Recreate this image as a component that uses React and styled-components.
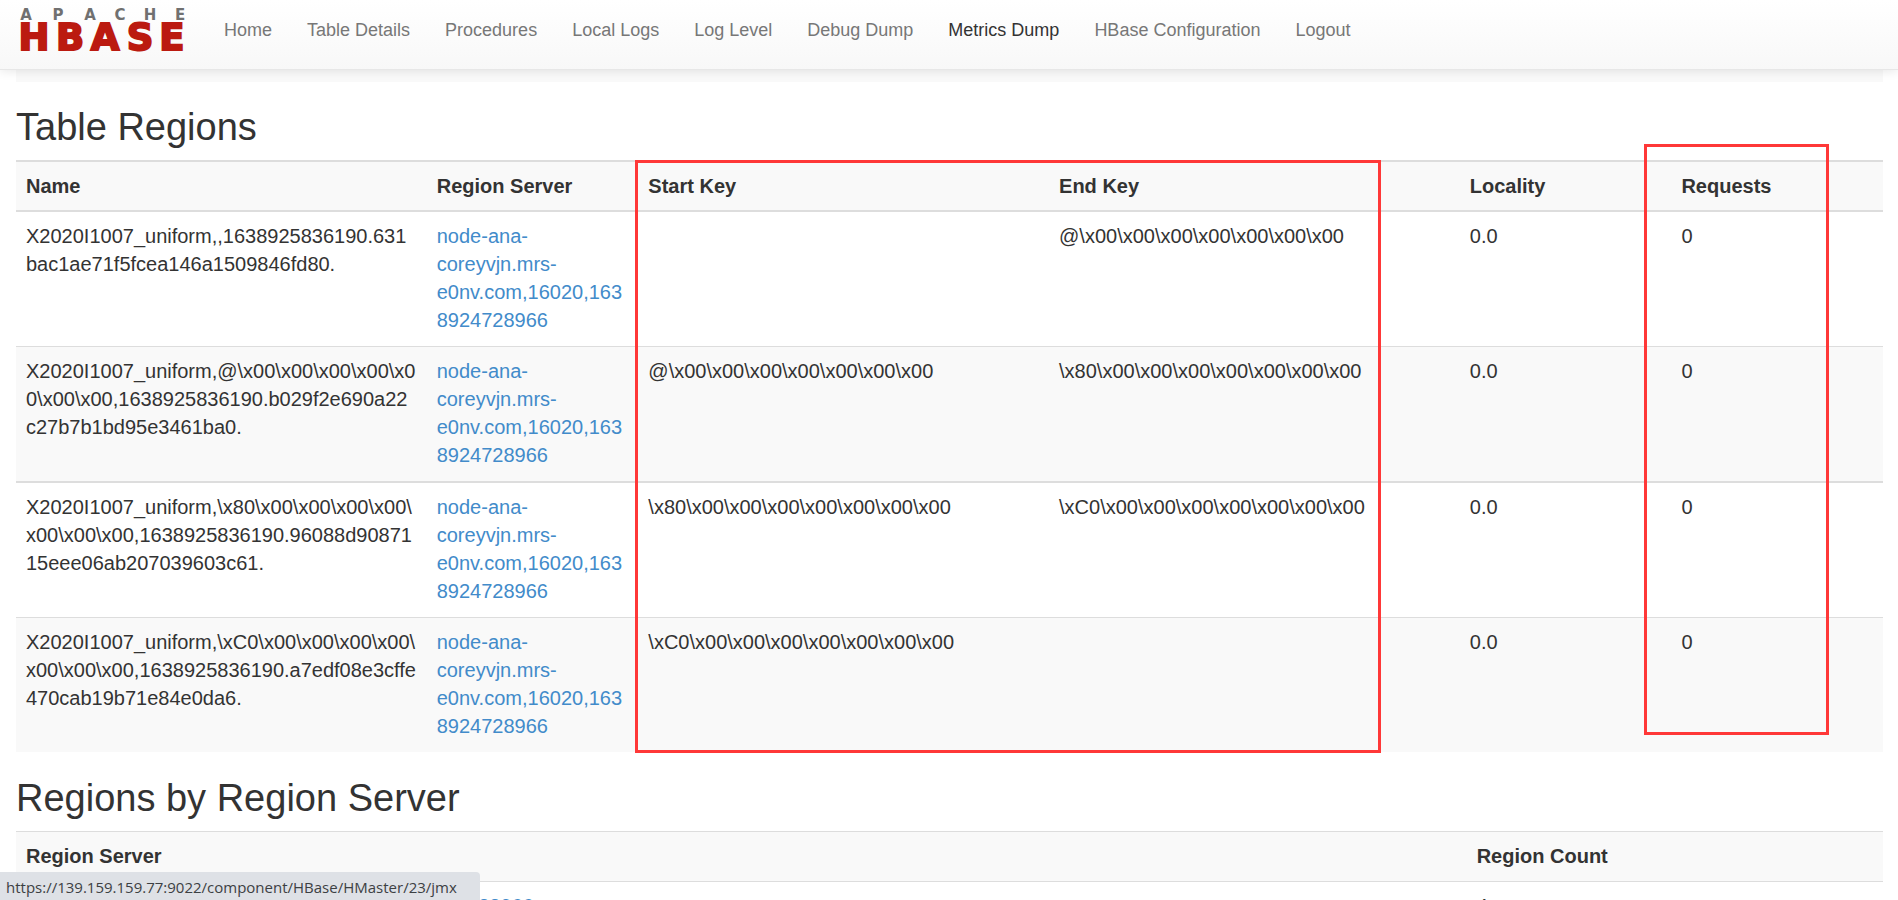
import React from "react";
import styled, { createGlobalStyle } from "styled-components";

const GlobalStyle = createGlobalStyle`
  *, *::before, *::after { box-sizing: border-box; }
  body {
    margin: 0;
    background: #fff;
    color: #333;
    font-family: "Liberation Sans", Arial, sans-serif;
    font-size: 20px;
    line-height: 28px;
  }
  a { color: #428bca; text-decoration: none; }
`;

const Shell = styled.div`
  display: flex;
  flex-direction: column;
  height: 100vh;
  overflow: hidden;
`;

const Navbar = styled.header`
  display: flex;
  flex: none;
  align-items: flex-start;
  height: 70px;
  padding-left: 19px;
  background: linear-gradient(to bottom, #fff, #f8f8f8);
  border-bottom: 1px solid #e7e7e7;
  box-shadow: 0 1px 10px rgba(0, 0, 0, 0.1);
  z-index: 2;
`;

const Brand = styled.a`
  display: block;
  padding-top: 8px;

  svg {
    display: block;
    overflow: visible;
  }
`;

const NavList = styled.nav`
  display: flex;
  gap: 35px;
  padding: 18px 0 0 37px;
`;

const NavLink = styled.a`
  color: ${({ $active }) => ($active ? "#333" : "#777")};
  font-size: 18px;
  line-height: 24px;
  white-space: nowrap;
`;

const Content = styled.main`
  flex: none;
  padding: 0 15px 0 16px;
`;

const PreviousRow = styled.div`
  height: 12px;
  background: #f9f9f9;
`;

const Heading = styled.h2`
  margin: 25px 0 12px;
  font-size: 38px;
  line-height: 41px;
  font-weight: 400;
`;

const TableFrame = styled.div`
  position: relative;
  margin-bottom: 26px;
`;

const Table = styled.table`
  width: 100%;
  table-layout: fixed;
  border-collapse: separate;
  border-spacing: 0;
`;

const Col = styled.col`
  width: ${({ $width }) => $width};
`;

const Row = styled.tr`
  background: ${({ $striped }) => ($striped ? "#f9f9f9" : "#fff")};

  th, td {
    border-top: ${({ $rule }) => $rule || 1}px solid #ddd;
  }
`;

const HeadCell = styled.th`
  padding: ${({ $compact }) => ($compact ? "10px" : "10px 10px 11px")};
  text-align: left;
  font-weight: 700;
`;

const Cell = styled.td`
  padding: 10px 10px 12px;
  vertical-align: top;
  overflow-wrap: anywhere;
`;

const Marker = styled.div`
  position: absolute;
  border: 3px solid #ff3838;
  pointer-events: none;
`;

const KeyMarker = styled(Marker)`
  top: 0;
  bottom: -1px;
  left: 619px;
  right: 502px;
`;

const RequestMarker = styled(Marker)`
  top: -16px;
  bottom: 17px;
  left: 1628px;
  right: 54px;
`;

const StatusBar = styled.div`
  position: fixed;
  left: 0;
  bottom: 0;
  z-index: 3;
  height: 28px;
  padding: 0 23px 0 6px;
  border-radius: 0 4px 0 0;
  background: #dee1e6;
  color: #3c4043;
  font-family: "Open Sans", "Noto Sans", sans-serif;
  font-size: 15px;
  line-height: 30px;
  white-space: nowrap;
`;

const NAV = [
  "Home",
  "Table Details",
  "Procedures",
  "Local Logs",
  "Log Level",
  "Debug Dump",
  "Metrics Dump",
  "HBase Configuration",
  "Logout",
];

const SERVER = "node-ana-coreyvjn.mrs-e0nv.com,16020,1638924728966";

const REGIONS = [
  {
    name: "X2020I1007_uniform,,1638925836190.631bac1ae71f5fcea146a1509846fd80.",
    start: "",
    end: "@\\x00\\x00\\x00\\x00\\x00\\x00\\x00",
    rule: 2,
  },
  {
    name: "X2020I1007_uniform,@\\x00\\x00\\x00\\x00\\x00\\x00\\x00,1638925836190.b029f2e690a22c27b7b1bd95e3461ba0.",
    start: "@\\x00\\x00\\x00\\x00\\x00\\x00\\x00",
    end: "\\x80\\x00\\x00\\x00\\x00\\x00\\x00\\x00",
    rule: 1,
  },
  {
    name: "X2020I1007_uniform,\\x80\\x00\\x00\\x00\\x00\\x00\\x00\\x00,1638925836190.96088d9087115eee06ab207039603c61.",
    start: "\\x80\\x00\\x00\\x00\\x00\\x00\\x00\\x00",
    end: "\\xC0\\x00\\x00\\x00\\x00\\x00\\x00\\x00",
    rule: 2,
  },
  {
    name: "X2020I1007_uniform,\\xC0\\x00\\x00\\x00\\x00\\x00\\x00\\x00,1638925836190.a7edf08e3cffe470cab19b71e84e0da6.",
    start: "\\xC0\\x00\\x00\\x00\\x00\\x00\\x00\\x00",
    end: "",
    rule: 1,
  },
];

function Logo() {
  return (
    <svg width="168" height="44" viewBox="0 0 168 44" role="img" aria-label="Apache HBase">
      <g fontFamily="DejaVu Sans, sans-serif" fontWeight="700" textAnchor="middle">
        <text x="7 39 71 101 131 161" y="12" fontSize="15" fill="#707070">APACHE</text>
        <text
          x="15 51 86 121 153"
          y="42"
          fontSize="37"
          fill="#bb1a10"
          stroke="#bb1a10"
          strokeWidth="2"
        >
          HBASE
        </text>
      </g>
    </svg>
  );
}

export default function App() {
  return (
    <>
      <GlobalStyle />
      <Shell>
        <Navbar>
          <Brand href="#home">
            <Logo />
          </Brand>
          <NavList>
            {NAV.map((label) => (
              <NavLink key={label} href="#" $active={label === "Metrics Dump"}>
                {label}
              </NavLink>
            ))}
          </NavList>
        </Navbar>

        <Content>
          <PreviousRow />
          <Heading>Table Regions</Heading>
          <TableFrame>
            <Table>
              <colgroup>
                <Col $width="22%" />
                <Col />
                <Col $width="22%" />
                <Col $width="22%" />
                <Col />
                <Col />
              </colgroup>
              <thead>
                <Row $striped $rule={2}>
                  <HeadCell $compact>Name</HeadCell>
                  <HeadCell $compact>Region Server</HeadCell>
                  <HeadCell $compact>Start Key</HeadCell>
                  <HeadCell $compact>End Key</HeadCell>
                  <HeadCell $compact>Locality</HeadCell>
                  <HeadCell $compact>Requests</HeadCell>
                </Row>
              </thead>
              <tbody>
                {REGIONS.map((region, index) => (
                  <Row key={region.name} $striped={index % 2 === 1} $rule={region.rule}>
                    <Cell>{region.name}</Cell>
                    <Cell>
                      <a href="#server">{SERVER}</a>
                    </Cell>
                    <Cell>{region.start}</Cell>
                    <Cell>{region.end}</Cell>
                    <Cell>0.0</Cell>
                    <Cell>0</Cell>
                  </Row>
                ))}
              </tbody>
            </Table>
            <KeyMarker />
            <RequestMarker />
          </TableFrame>

          <Heading>Regions by Region Server</Heading>
          <Table>
            <colgroup>
              <Col />
              <Col $width="22.3%" />
            </colgroup>
            <thead>
              <Row $striped>
                <HeadCell>Region Server</HeadCell>
                <HeadCell>Region Count</HeadCell>
              </Row>
            </thead>
            <tbody>
              <Row>
                <Cell>
                  <a href="#server">{SERVER}</a>
                </Cell>
                <Cell>4</Cell>
              </Row>
            </tbody>
          </Table>
        </Content>
        <StatusBar>https://139.159.159.77:9022/component/HBase/HMaster/23/jmx</StatusBar>
      </Shell>
    </>
  );
}
